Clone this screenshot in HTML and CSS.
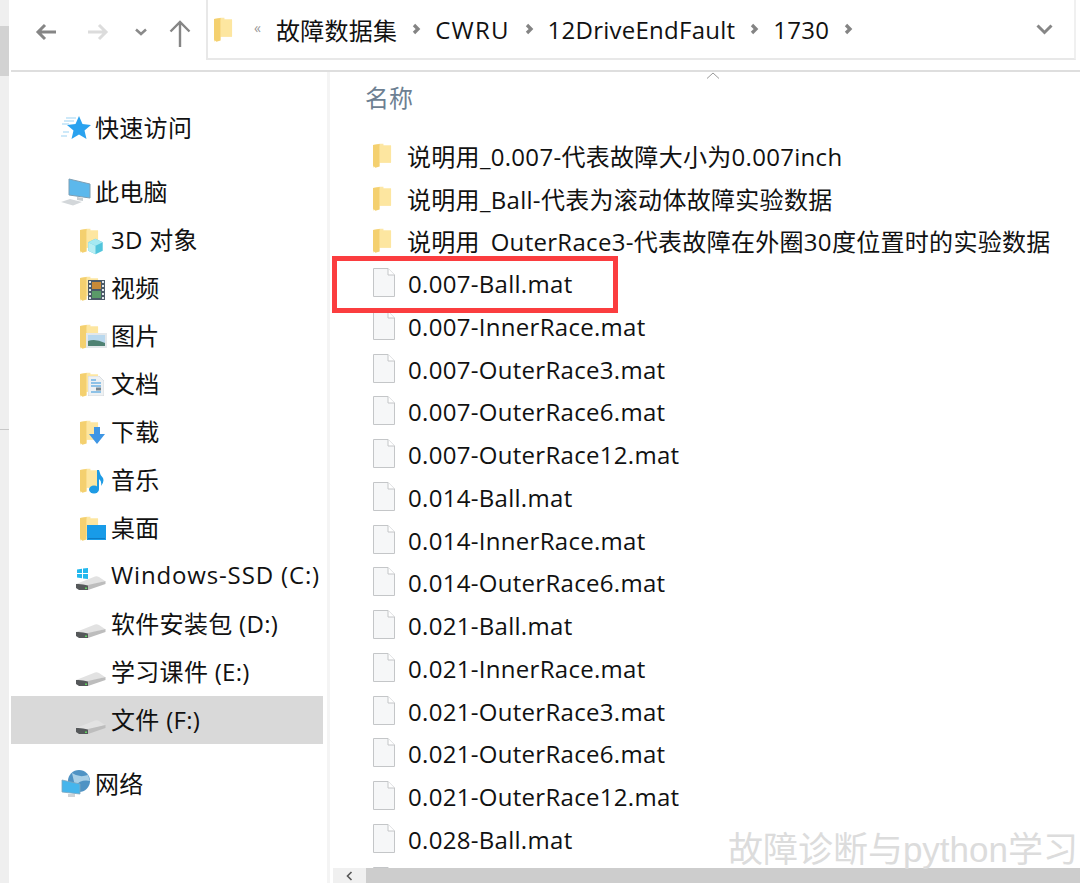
FILE: index.html
```html
<!DOCTYPE html>
<html>
<head>
<meta charset="utf-8">
<title>1730</title>
<link rel="stylesheet" href="styles.css">
</head>

<body>
<svg class="defs" width="0" height="0">
	<defs>
		<symbol id="folder" viewBox="0 0 20 27">
			<path d="M0 2.500 L7 1 H11 V3 H19 V21 H7 L0 26.500 Z" fill="#fce7a6"/>
			<path d="M0 2.500 L7 1.500 V25 L2.500 26.500 L0 24 Z" fill="#f4d06f"/>
			<path d="M7 3 H19 V21 H7 Z" fill="#fde6a0"/>
		</symbol>
		<symbol id="file" viewBox="0 0 22 29">
			<path d="M.5 .5 H15 L21.500 7 V28.500 H.5 Z" fill="#f6f7f8" stroke="#c4c6c8"/>
			<path d="M15 .5 V7 H21.500" fill="#fff" stroke="#c4c6c8"/>
		</symbol>
		<symbol id="drive" viewBox="0 0 30 16">
			<path d="M0 9 L19 1.500 Q21 1 23 2 L29 6 L12 11 Z" fill="#e2e2e2"/>
			<path d="M12 10 L29.500 6 V9 L12 15 Z" fill="#bdbdbd"/>
			<path d="M0 9 Q6 8.500 12 10.500 V15 H3 L0 13 Z" fill="#55585a"/>
			<rect x="9" y="12.500" width="2" height="1.500" fill="#5fd35f"/>
		</symbol>
	</defs>
</svg>

<div class="window">
	<div class="edge"><span class="edge_dark"></span><span class="edge_tick"></span></div>
	<div class="app">
		<div class="toolbar">
			<div class="nav">
				<svg class="nav_back" width="22" height="18" viewBox="0 0 22 18"><path d="M10 2 L3 9 L10 16 M3 9 H21" fill="none" stroke="#868686" stroke-width="3"/></svg>
				<svg class="nav_fwd" width="22" height="18" viewBox="0 0 22 18"><path d="M12 2 L19 9 L12 16 M19 9 H1" fill="none" stroke="#dcdcdc" stroke-width="3"/></svg>
				<svg class="nav_down" width="12" height="8" viewBox="0 0 12 8"><path d="M1 1.500 L6 6 L11 1.500" fill="none" stroke="#8a8a8a" stroke-width="2.500"/></svg>
				<svg class="nav_up" width="22" height="28" viewBox="0 0 22 28"><path d="M1.500 11.500 L11 2 L20.500 11.500 M11 2 V27" fill="none" stroke="#868686" stroke-width="2.400"/></svg>
			</div>
			<div class="address">
				<svg class="addr_folder" width="19" height="27"><use href="#folder"/></svg>
				<span class="addr_more">«</span>
				<span class="crumb">故障数据集</span><svg class="sep" width="9" height="12" viewBox="0 0 9 12"><path d="M2 2 L6 6 L2 10" fill="none" stroke="#848484" stroke-width="3.300"/></svg>
				<span class="crumb cwru">CWRU</span><svg class="sep" width="9" height="12" viewBox="0 0 9 12"><path d="M2 2 L6 6 L2 10" fill="none" stroke="#848484" stroke-width="3.300"/></svg>
				<span class="crumb">12DriveEndFault</span><svg class="sep" width="9" height="12" viewBox="0 0 9 12"><path d="M2 2 L6 6 L2 10" fill="none" stroke="#848484" stroke-width="3.300"/></svg>
				<span class="crumb">1730</span><svg class="sep" width="9" height="12" viewBox="0 0 9 12"><path d="M2 2 L6 6 L2 10" fill="none" stroke="#848484" stroke-width="3.300"/></svg>
				<svg class="addr_drop" width="17" height="11" viewBox="0 0 17 11"><path d="M1.500 1.500 L8.500 8.500 L15.500 1.500" fill="none" stroke="#868686" stroke-width="3"/></svg>
			</div>
		</div>

		<div class="panes">
			<div class="side">
				<div class="side_row top">
					<svg class="ico_top" width="30" height="26" viewBox="0 0 30 26">
						<path d="M18 1 L21.500 9 L30 10 L23.500 15.500 L25.500 24 L18 19.500 L10.500 24 L12.500 15.500 L6 10 L14.500 9 Z" fill="#2aa2ef"/>
						<path d="M5 3 H15 M3 6 H13 M1 9 H8 M2 17 H8 M0 21 H6" stroke="#bfe2f8" stroke-width="1.500"/>
					</svg>
					<span>快速访问</span>
				</div>

				<div class="side_row top gap">
					<svg class="ico_top" width="30" height="28" viewBox="0 0 30 28">
						<path d="M8 1 L29 6 V20 L8 17 Z" fill="#5cb8ec" stroke="#7f9fb4"/>
						<path d="M16 19 L22 20 V23 L16 22 Z" fill="#c8ced2"/>
						<path d="M0 24 L9 21 L21 24 L12 27.500 Z" fill="#d3d7da"/>
					</svg>
					<span>此电脑</span>
				</div>
				<div class="side_row sub">
					<span class="ico_sub">
						<svg class="f_back" width="19" height="27"><use href="#folder"/></svg>
						<svg class="overlay o_cube" width="17" height="17" viewBox="0 0 19 20"><path d="M9.500 1 L18 5 V15 L9.500 19 L1 15 V5 Z" fill="#52c5dc"/><path d="M9.500 9 L18 5 L9.500 1 L1 5 Z" fill="#a5e9f2"/><path d="M1 5 L9.500 9 V19 L1 15 Z" fill="#b8eef3"/></svg>
					</span>
					<span>3D 对象</span>
				</div>
				<div class="side_row sub">
					<span class="ico_sub">
						<svg class="f_back" width="19" height="27"><use href="#folder"/></svg>
						<svg class="overlay o_film" width="17" height="20" viewBox="0 0 17 20"><rect width="17" height="20" fill="#4b5a68"/><rect x="4" y="2" width="9" height="7" fill="#c88a38"/><rect x="4" y="11" width="9" height="7" fill="#5a9a68"/><path d="M1 2 H3 M1 6 H3 M1 10 H3 M1 14 H3 M1 18 H3 M14 2 H16 M14 6 H16 M14 10 H16 M14 14 H16 M14 18 H16" stroke="#dfe5ea" stroke-width="2"/></svg>
					</span>
					<span>视频</span>
				</div>
				<div class="side_row sub">
					<span class="ico_sub">
						<svg class="f_back" width="19" height="27"><use href="#folder"/></svg>
						<svg class="overlay o_pic" width="21" height="15" viewBox="0 0 21 15"><rect width="21" height="15" fill="#e3e7ea"/><rect x="2" y="2" width="17" height="11" fill="#b9d8ee"/><path d="M2 8 Q9 5 19 10 V13 H2 Z" fill="#4f8273"/></svg>
					</span>
					<span>图片</span>
				</div>
				<div class="side_row sub">
					<span class="ico_sub">
						<svg class="f_back" width="19" height="27"><use href="#folder"/></svg>
						<svg class="overlay o_doc" width="16" height="20" viewBox="0 0 16 20"><path d="M0 0 H11 L16 5 V20 H0 Z" fill="#eef1f3" stroke="#c9cdd0" stroke-width=".6"/><path d="M3 4 H8 M3 7 H13 M3 10 H13 M3 16 H13" stroke="#6fb2e4" stroke-width="1.300"/><rect x="8" y="11.500" width="5" height="3" fill="#76868f"/></svg>
					</span>
					<span>文档</span>
				</div>
				<div class="side_row sub">
					<span class="ico_sub">
						<svg class="f_back" width="19" height="27"><use href="#folder"/></svg>
						<svg class="overlay o_down" width="16" height="17" viewBox="0 0 16 17"><path d="M5 0 H11 V7 H16 L8 17 L0 7 H5 Z" fill="#3f96e4"/></svg>
					</span>
					<span>下载</span>
				</div>
				<div class="side_row sub">
					<span class="ico_sub">
						<svg class="f_back" width="19" height="27"><use href="#folder"/></svg>
						<svg class="overlay o_music" width="15" height="25" viewBox="0 0 15 25"><ellipse cx="5" cy="20.500" rx="5" ry="4" fill="#1e9be4"/><path d="M8 1 H10 Q11 6 14 9 Q15.500 13 12 17 Q13 12 10 10 V20 H8 Z" fill="#1e9be4"/></svg>
					</span>
					<span>音乐</span>
				</div>
				<div class="side_row sub">
					<span class="ico_sub">
						<svg class="f_back" width="19" height="27"><use href="#folder"/></svg>
						<svg class="overlay o_desk" width="19" height="15" viewBox="0 0 19 15"><rect width="19" height="15" fill="#189be8"/><path d="M1 13.500 H18" stroke="#0e7cc4" stroke-width="1"/></svg>
					</span>
					<span>桌面</span>
				</div>
				<div class="side_row sub">
					<span class="ico_sub drive_box">
						<svg class="win_flag" width="11" height="11" viewBox="0 0 11 11"><path d="M0 1.500 L5 .7 V5 H0 Z M6 .5 L11 0 V5 H6 Z M0 6 H5 V10.300 L0 9.500 Z M6 6 H11 V11 L6 10.500 Z" fill="#22b8ee"/></svg>
						<svg width="30" height="16"><use href="#drive"/></svg>
					</span>
					<span class="win_label">Windows-SSD (C:)</span>
				</div>
				<div class="side_row sub">
					<span class="ico_sub drive_box"><svg width="30" height="16"><use href="#drive"/></svg></span>
					<span>软件安装包 (D:)</span>
				</div>
				<div class="side_row sub">
					<span class="ico_sub drive_box"><svg width="30" height="16"><use href="#drive"/></svg></span>
					<span>学习课件 (E:)</span>
				</div>
				<div class="side_row sub selected">
					<span class="ico_sub drive_box"><svg width="30" height="16"><use href="#drive"/></svg></span>
					<span>文件 (F:)</span>
				</div>

				<div class="side_row top gap">
					<svg class="ico_top" width="30" height="30" viewBox="0 0 30 30">
						<circle cx="18" cy="12" r="11" fill="#4f93c4"/>
						<path d="M11 4 Q18 9 27 6 L29 12 Q20 10 14 17 Z" fill="#a8cfe6"/>
						<path d="M1 11 L19 15 V25 L1 23 Z" fill="#45b5ec" stroke="#7fa6be" stroke-width=".8"/>
						<path d="M7 25 H14 V28 H7 Z" fill="#cfd4d8"/>
					</svg>
					<span>网络</span>
				</div>
			</div>

			<div class="main">
				<svg class="sort_arrow" width="14" height="7" viewBox="0 0 14 7"><path d="M1 6.500 L7 1 L13 6.500" fill="none" stroke="#9a9a9a" stroke-width="1"/></svg>
				<div class="head">名称</div>
				<div class="list">
					<div class="row"><svg class="ico_folder" width="19" height="27"><use href="#folder"/></svg><span>说明用_0.007-代表故障大小为0.007inch</span></div>
					<div class="row"><svg class="ico_folder" width="19" height="27"><use href="#folder"/></svg><span>说明用_Ball-代表为滚动体故障实验数据</span></div>
					<div class="row"><svg class="ico_folder" width="19" height="27"><use href="#folder"/></svg><span>说明用<span class="wide_space">&nbsp;</span>OuterRace3-代表故障在外圈30度位置时的实验数据</span></div>
					<div class="row"><svg class="ico_file" width="22" height="29"><use href="#file"/></svg><span>0.007-Ball.mat</span></div>
					<div class="row"><svg class="ico_file" width="22" height="29"><use href="#file"/></svg><span>0.007-InnerRace.mat</span></div>
					<div class="row"><svg class="ico_file" width="22" height="29"><use href="#file"/></svg><span>0.007-OuterRace3.mat</span></div>
					<div class="row"><svg class="ico_file" width="22" height="29"><use href="#file"/></svg><span>0.007-OuterRace6.mat</span></div>
					<div class="row"><svg class="ico_file" width="22" height="29"><use href="#file"/></svg><span>0.007-OuterRace12.mat</span></div>
					<div class="row"><svg class="ico_file" width="22" height="29"><use href="#file"/></svg><span>0.014-Ball.mat</span></div>
					<div class="row"><svg class="ico_file" width="22" height="29"><use href="#file"/></svg><span>0.014-InnerRace.mat</span></div>
					<div class="row"><svg class="ico_file" width="22" height="29"><use href="#file"/></svg><span>0.014-OuterRace6.mat</span></div>
					<div class="row"><svg class="ico_file" width="22" height="29"><use href="#file"/></svg><span>0.021-Ball.mat</span></div>
					<div class="row"><svg class="ico_file" width="22" height="29"><use href="#file"/></svg><span>0.021-InnerRace.mat</span></div>
					<div class="row"><svg class="ico_file" width="22" height="29"><use href="#file"/></svg><span>0.021-OuterRace3.mat</span></div>
					<div class="row"><svg class="ico_file" width="22" height="29"><use href="#file"/></svg><span>0.021-OuterRace6.mat</span></div>
					<div class="row"><svg class="ico_file" width="22" height="29"><use href="#file"/></svg><span>0.021-OuterRace12.mat</span></div>
					<div class="row"><svg class="ico_file" width="22" height="29"><use href="#file"/></svg><span>0.028-Ball.mat</span></div>
					<div class="row"><svg class="ico_file" width="22" height="29"><use href="#file"/></svg></div>
				</div>
				<div class="hscroll">
					<span class="hscroll_btn"><svg width="7" height="10" viewBox="0 0 7 10"><path d="M5.500 1 L1.500 5 L5.500 9" fill="none" stroke="#555" stroke-width="1.600"/></svg></span>
					<span class="hscroll_thumb"></span>
				</div>
				<div class="mark_box"></div>
			</div>
		</div>
	</div>
	<div class="watermark">故障诊断与python学习</div>
</div>
</body>

</html>
```
FILE: styles.css
```css
html,body{margin: 0;padding: 0;background: #fff;}
body{font-family: "Open Sans","Noto Sans CJK SC",sans-serif;font-size: 24px;color: #111;}
.defs{position: absolute;}

.window{position: relative;display: flex;height: 883px;overflow: hidden;}
.edge{position: relative;width: 9px;background: #efefef;flex: none;}
.edge_dark{position: absolute;left: 0;top: 26px;width: 9px;height: 50px;background: #d2d2d2;}
.edge_tick{position: absolute;left: 0;top: 429px;width: 9px;height: 1px;background: #c8c8c8;}
.app{flex: 1;display: flex;flex-direction: column;min-width: 0;}

.toolbar{display: flex;height: 70px;margin-left: 2px;border-bottom: 2px solid #dedede;flex: none;}
.nav{display: flex;align-items: center;width: 195px;padding: 0 0 6px 24px;box-sizing: border-box;}
.nav_back{flex: none;}
.nav_fwd{flex: none;margin-left: 30px;}
.nav_down{flex: none;margin-left: 26px;}
.nav_up{flex: none;margin-left: 22px;margin-top: 4px;}
.address{display: flex;align-items: center;height: 60px;width: 870px;box-sizing: border-box;border-left: 2px solid #e8e8e8;border-bottom: 2px solid #e8e8e8;border-right: 2px solid #f0f0f0;padding-left: 6px;}
.addr_folder{flex: none;}
.addr_more{font-size: 14px;color: #999;margin-left: 21px;margin-right: 15px;margin-top: -4px;}
.crumb{white-space: nowrap;font-size: 24px;letter-spacing: .25px;}
.crumb.cwru{letter-spacing: 1.2px;}
.sep{flex: none;margin: 0 14px 0 15px;}
.addr_drop{flex: none;margin-left: auto;margin-right: 21px;}

.panes{flex: 1;display: flex;min-height: 0;}
.side{width: 316px;margin-left: 2px;padding-top: 32px;border-right: 3px solid #f4f4f4;flex: none;}
.side_row{display: flex;align-items: center;height: 48px;white-space: nowrap;letter-spacing: .3px;}
.side_row > span:last-child{margin-bottom: 4px;}
.side_row.gap{margin-top: 16px;}
.side_row.top{padding-left: 50px;}
.side_row.sub{padding-left: 65px;}
.ico_top{flex: none;margin-right: 4px;}
.ico_sub{position: relative;display: block;flex: none;width: 35px;height: 30px;}
.f_back{position: absolute;left: 4px;top: 2px;}
.overlay{position: absolute;left: 12px;top: 7px;}
.o_cube{left: 11px;top: 13px;}
.o_pic{left: 10px;top: 12px;}
.o_down{left: 13px;top: 10px;}
.o_music{left: 13px;top: 4px;}
.o_desk{left: 11px;top: 12px;}
.drive_box svg{position: absolute;left: 0;top: 14px;}
.drive_box .win_flag{left: 1px;top: 7px;}
.win_label{letter-spacing: .85px;}
.selected{width: 312px;box-sizing: border-box;background: #d9d9d9;}

.main{position: relative;flex: 1;display: flex;flex-direction: column;min-width: 0;}
.sort_arrow{position: absolute;left: 376px;top: 0;}
.head{height: 62px;box-sizing: border-box;padding: 10px 0 0 35px;line-height: 32px;color: #6d7f92;flex: none;}
.list{flex: 1;min-height: 0;overflow: hidden;}
.row{display: flex;align-items: center;height: 42.75px;padding-left: 43px;white-space: nowrap;letter-spacing: .3px;}
.wide_space{letter-spacing: 4.5px;}
.ico_folder{flex: none;margin-right: 15px;}
.ico_file{flex: none;margin: 0 13px 2px 0;}
.hscroll{display: flex;height: 15px;flex: none;margin-left: 3px;}
.hscroll_btn{display: flex;align-items: center;justify-content: center;width: 33px;background: #f0f0f0;}
.hscroll_thumb{flex: 1;background: #cdcdcd;}

.mark_box{position: absolute;left: 2px;top: 184px;width: 276px;height: 47px;border: 5px solid #fb3d3f;}
.watermark{position: absolute;right: 2px;top: 828px;font-family: "Liberation Sans","Noto Sans CJK SC",sans-serif;font-size: 35px;line-height: 44px;color: #dcdcdc;white-space: nowrap;}
```
